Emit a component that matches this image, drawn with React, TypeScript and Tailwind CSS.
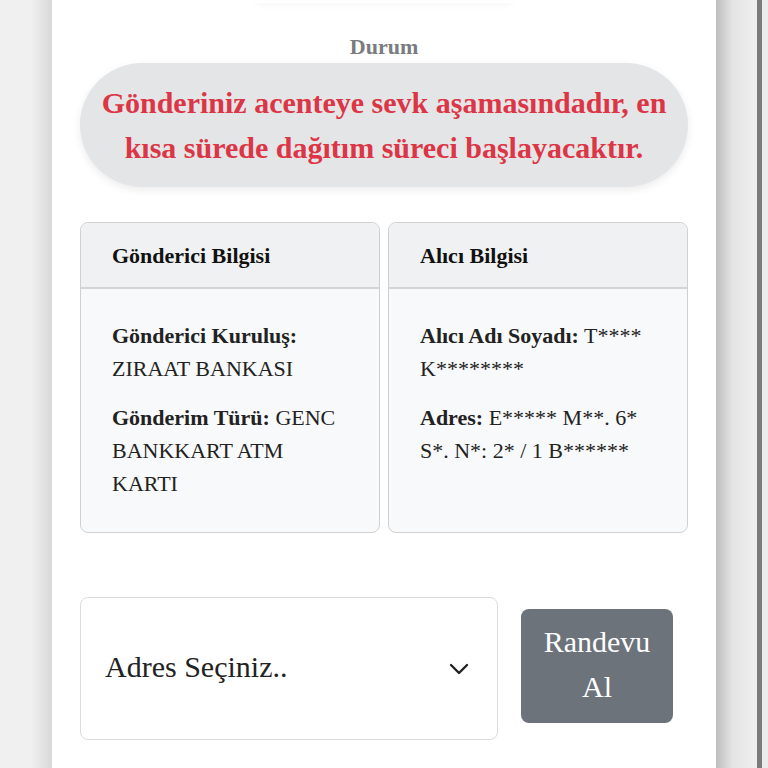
import React from "react";

function InfoCard({ title, children }: { title: string; children: React.ReactNode }) {
  return (
    <div className="flex-1 overflow-hidden rounded-lg border border-[#cfd0d2] bg-[#f8f9fa]">
      <div className="border-b-2 border-[#d3d4d6] bg-[#f0f1f3] pt-[18px] pr-8 pb-[16px] pl-[31px] text-[22px] leading-[30px] font-bold text-[#111]">
        {title}
      </div>
      <div className="flex flex-col gap-4 pt-[30px] pr-8 pb-8 pl-[31px] text-[22px] leading-[33px] text-[#222]">
        {children}
      </div>
    </div>
  );
}

export default function App() {
  return (
    <div className="flex h-[768px] w-[768px] overflow-hidden bg-[#f0f0f0] font-['Liberation_Serif',serif]">
      <div className="w-[52px] shrink-0 bg-[linear-gradient(to_right,#f0f0f0_60%,#d8d8d8)]" />
      <div className="flex w-[664px] shrink-0 flex-col bg-white px-7">
        <div className="mx-auto h-[3px] w-[256px] rounded-b-full shadow-[0_2px_6px_rgba(0,0,0,0.06)]" />
        <div className="mt-[32px] text-center text-[22px] leading-[24px] font-bold text-[#7a7c80]">Durum</div>
        <div className="mt-[4px] rounded-full bg-[#e4e5e7] px-5 py-[17px] text-center text-[30px] leading-[45px] font-bold text-[#dc3545] shadow-[0_3px_8px_rgba(0,0,0,0.08)]">
          Gönderiniz acenteye sevk aşamasındadır, en kısa sürede dağıtım süreci başlayacaktır.
        </div>
        <div className="mt-[35px] flex gap-2">
          <InfoCard title="Gönderici Bilgisi">
            <p>
              <b>Gönderici Kuruluş:</b> ZIRAAT BANKASI
            </p>
            <p>
              <b>Gönderim Türü:</b> GENC BANKKART ATM KARTI
            </p>
          </InfoCard>
          <InfoCard title="Alıcı Bilgisi">
            <p>
              <b>Alıcı Adı Soyadı:</b> T**** K********
            </p>
            <p>
              <b>Adres:</b> E***** M**. 6* S*. N*: 2* / 1 B******
            </p>
          </InfoCard>
        </div>
        <div className="mt-[64px] flex items-center gap-[23px]">
          <div className="flex h-[143px] w-[418px] items-center justify-between rounded-lg border border-[#dcdcdc] bg-white pr-[28px] pl-6">
            <span className="mb-[4px] text-[30px] text-[#222]">Adres Seçiniz..</span>
            <svg width="20" height="12" viewBox="0 0 20 12" fill="none" stroke="#222" strokeWidth="2.4" strokeLinecap="round" strokeLinejoin="round">
              <path d="M2 2l8 8 8-8" />
            </svg>
          </div>
          <button className="mb-[6px] h-[114px] w-[152px] rounded-lg bg-[#6c737b] px-3 pb-[3px] text-[30px] leading-[45px] text-white">
            Randevu Al
          </button>
        </div>
      </div>
      <div className="w-[41px] shrink-0 bg-[linear-gradient(to_right,#bdbdbd,#e4e4e4_40%,#efefef)]" />
      <div className="w-[5px] shrink-0 bg-[#7b7b7b]" />
      <div className="flex-1 bg-[#ececec]" />
    </div>
  );
}
